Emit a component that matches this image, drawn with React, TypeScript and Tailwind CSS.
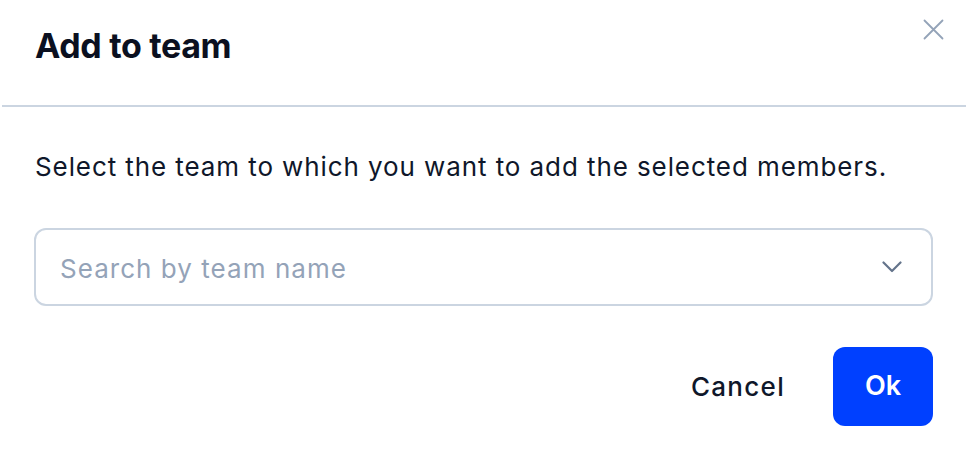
import React from "react";

export default function App() {
  return (
    <div
      className="w-[974px] h-[464px] bg-white overflow-hidden"
      style={{ fontFamily: "Inter, 'Liberation Sans', sans-serif" }}
    >
      <div className="relative h-[105px] pl-[35px] pt-[26px]">
        <h1 className="text-[34px] leading-[40px] font-bold tracking-[-0.01em] text-[#0b1020]">
          Add to team
        </h1>
        <button className="absolute right-[30px] top-[18px] w-[22px] h-[22px] flex items-center justify-center">
          <svg width="21" height="21" viewBox="0 0 21 21" fill="none">
            <path d="M1.5 1.5L19.5 19.5M19.5 1.5L1.5 19.5" stroke="#94a3b8" strokeWidth="1.8" strokeLinecap="round" />
          </svg>
        </button>
      </div>
      <div className="ml-[2px] w-[964px] h-[2px] bg-[#cbd5e1]" />
      <div className="px-[34px]">
        <p className="mt-[44px] pl-[1px] text-[26px] leading-[32px] tracking-[0.035em] text-[#0f172a]">
          Select the team to which you want to add the selected members.
        </p>
        <div className="mt-[45px] w-[899px] h-[78px] rounded-[12px] border-2 border-[#cbd5e1] flex items-center justify-between pl-[24px] pr-[29px]">
          <span className="text-[26px] tracking-[0.04em] text-[#94a3b8] pt-[2px]">Search by team name</span>
          <svg width="20" height="12" viewBox="0 0 20 12" fill="none">
            <path d="M1.5 1.5L10 10L18.5 1.5" stroke="#64748b" strokeWidth="2.2" strokeLinecap="round" strokeLinejoin="round" />
          </svg>
        </div>
        <div className="mt-[41px] w-[899px] flex justify-end items-center gap-[48px]">
          <button className="text-[26px] font-medium tracking-[0.05em] text-[#0f172a]">Cancel</button>
          <button className="w-[100px] h-[79px] rounded-[12px] bg-[#0040ff] text-white text-[27px] font-semibold">
            Ok
          </button>
        </div>
      </div>
    </div>
  );
}
